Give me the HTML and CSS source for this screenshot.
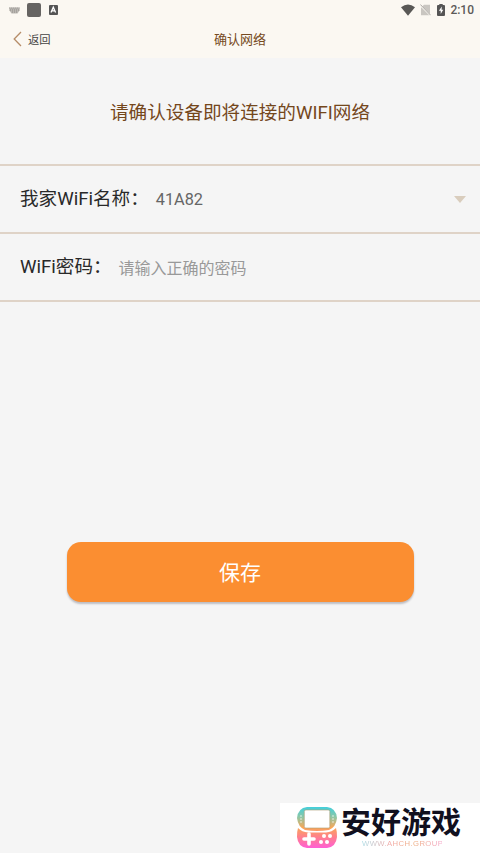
FILE: index.html
```html
<!DOCTYPE html>
<html lang="zh-CN">
<head>
<meta charset="utf-8">
<title>确认网络</title>
<link rel="stylesheet" href="styles.css">
</head>
<body>
<div class="status">
  <svg class="keyboard" width="11" height="7" viewBox="0 0 11 7"><path d="M.3.5h10.4v2.800L8.500 6.500h-6L.3 3.300z" fill="#bbb8b3"/><path d="M.3 1h10.400M1 3h9M3 5h5" stroke="#8f8c88" stroke-width="1" stroke-dasharray="1 1"/></svg>
  <span class="square"></span>
  <svg class="letter" width="9" height="10" viewBox="0 0 9 10"><rect width="9" height="10" rx="1" fill="#555"/><path d="M2 7.5 4.3 2.2 6.6 7.5M3 5.8h2.700" fill="none" stroke="#fff" stroke-width="1.300"/></svg>
  <svg class="wifi" width="14" height="12" viewBox="0 0 14 12"><path d="M0 3.200Q7-2.200 14 3.200L7 11.800z" fill="#595856"/></svg>
  <svg class="sim" width="11" height="12" viewBox="0 0 11 12"><path d="M4 .7h6v10.600H1V3.700z" fill="#c9c6c1"/><path d="M0 1l10.500 10.500" stroke="#faf7f1" stroke-width="1.400"/><path d="M.4.5l10.200 10.700" stroke="#aaa7a3"/></svg>
  <svg class="battery" width="8" height="12" viewBox="0 0 8 12"><path d="M2.300 0h3.400v1H7q1 0 1 1v9q0 1-1 1H1q-1 0-1-1V2q0-1 1-1h1.300z" fill="#555"/><path d="M4.800 2.600 1.900 6.800h1.800v3.200L6.300 5.800H4.600z" fill="#fff"/></svg>
  <span class="time">2:10</span>
</div>
<header class="nav">
  <div class="back">
    <svg width="9" height="16" viewBox="0 0 9 16"><path d="M8 1 1.200 8 8 15" fill="none" stroke="#b68d69" stroke-width="1.300"/></svg>
    <span>返回</span>
  </div>
  <div class="title">确认网络</div>
  <div></div>
</header>
<main>
  <h1>请确认设备即将连接的WIFI网络</h1>
  <div class="form">
    <div class="row"><span class="label">我家WiFi名称：</span><span class="value">41A82</span><svg class="arrow" width="12" height="7" viewBox="0 0 12 7"><path d="M0 0h12L6 7z" fill="#d9cdbd"/></svg></div>
    <div class="row"><span class="label">WiFi密码：</span><span class="hint">请输入正确的密码</span></div>
  </div>
  <button class="save">保存</button>
</main>
<footer class="brand">
  <svg class="console" width="40" height="42" viewBox="0 0 40 42">
    <defs><linearGradient id="g" gradientUnits="userSpaceOnUse" x1="0" y1="0" x2="0" y2="41"><stop offset="0" stop-color="#43cfdb"/><stop offset=".25" stop-color="#8fc7a5"/><stop offset=".5" stop-color="#f9a757"/><stop offset=".75" stop-color="#ff7d91"/><stop offset="1" stop-color="#ff5fd5"/></linearGradient></defs>
    <path d="M10 0h20q9 1 10 11-1 9-8 12-12 2-24 0-7-3-8-12Q1 1 10 0z" fill="url(#g)"/>
    <path d="M1 21q4 4 10 4.500h18q6-.5 10-4.500 1 3 1 9-1 10-10 11H10Q1 40 0 30q0-6 1-9z" fill="url(#g)"/>
    <rect x="7.300" y="3" width="25.500" height="18" rx="1.500" fill="#fff" stroke="#ad9c74" stroke-width=".6"/>
    <path d="M12 27v10M7 32h10" stroke="#fff" stroke-width="3.600" stroke-linecap="round"/>
    <g fill="#fff"><circle cx="27" cy="29" r="2"/><circle cx="33" cy="29" r="2"/><circle cx="24" cy="35" r="2"/><circle cx="30" cy="35" r="2"/><circle cx="4" cy="9" r=".7"/><circle cx="4" cy="12" r=".7"/><circle cx="4" cy="15" r=".7"/><circle cx="36" cy="9" r=".7"/><circle cx="36" cy="12" r=".7"/><circle cx="36" cy="15" r=".7"/></g>
  </svg>
  <div class="words"><div class="name">安好游戏</div><div class="url">WWW.AHCH.GROUP</div></div>
</footer>
</body>
</html>
```

FILE: styles.css
```css
* { box-sizing: border-box; }
body {
  margin: 0;
  height: 853px;
  display: flex;
  flex-direction: column;
  overflow: hidden;
  background: #f5f5f5;
  font-family: Roboto, "Noto Sans CJK SC", sans-serif;
}
svg { display: block; flex: none; }
.status {
  height: 20px;
  flex: none;
  display: flex;
  align-items: center;
  padding: 0 6px 0 9px;
  background: #fbf8f2;
}
.square { width: 14px; height: 14px; margin: 0 8px 0 7px; border-radius: 2px; background: #666462; }
.letter { margin-right: auto; }
.sim { margin: 0 6px 0 5px; }
.battery { margin-right: 5px; }
.time { font-size: 12px; font-weight: 500; line-height: 20px; color: #5c5a58; }
.nav {
  height: 38px;
  flex: none;
  display: grid;
  grid-template-columns: 1fr auto 1fr;
  align-items: center;
  background: #fbf8f2;
}
.back { display: flex; align-items: center; gap: 6px; padding-left: 13px; font-size: 11.3px; color: #444; }
.title { padding-bottom: 2px; font-size: 13px; color: #764a21; }
main { flex: 1; display: flex; flex-direction: column; align-items: center; }
h1 {
  margin: 0;
  height: 106px;
  font-size: 18.6px;
  font-weight: 400;
  line-height: 110px;
  color: #74471c;
}
.form { width: 100%; border-top: 2px solid #dfd3c7; }
.row {
  height: 68px;
  display: flex;
  align-items: center;
  padding: 0 14px 0 20px;
  border-bottom: 2px solid #dfd3c7;
}
.label { margin-right: 7px; padding-bottom: 5px; font-size: 18.6px; color: #292929; }
.value { font-size: 16.3px; color: #666; }
.hint { font-size: 16px; color: #999; }
.arrow { margin-left: auto; }
.save {
  width: 347px;
  height: 60px;
  margin-top: 240px;
  padding: 3px 0 0;
  border: 0;
  border-radius: 14px;
  background: #fb8e31;
  box-shadow: 0 2px 2px #bdbdc2;
  font: 400 21px/57px Roboto, "Noto Sans CJK SC", sans-serif;
  color: #fff;
}
.brand {
  width: 200px;
  height: 50px;
  flex: none;
  align-self: flex-end;
  display: flex;
  padding: 4px 0 0 17px;
  background: #fff;
}
.words { margin-left: 4px; }
.name { font-size: 30px; font-weight: 700; line-height: 32px; color: #11101f; white-space: nowrap; }
.url {
  width: 80px;
  margin-left: 21px;
  font: 7.7px/9px "Liberation Sans", sans-serif;
  letter-spacing: .4px;
  white-space: nowrap;
  color: transparent;
  background: linear-gradient(90deg, #a9dbe5, #f3a8a5 35%, #edaa7c 65%, #f5a9cb);
  background-clip: text;
}
```
